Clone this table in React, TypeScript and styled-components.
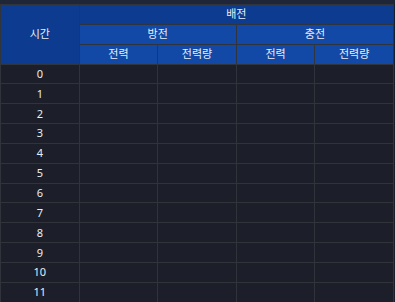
// @ts-nocheck
import styled, { createGlobalStyle } from 'styled-components'

const GlobalStyle = createGlobalStyle`
  body {
    margin: 0;
    background: #1c1f29;
    font-family: 'Noto Sans', 'Noto Sans CJK KR', sans-serif;
  }
`

const hours = Array.from({ length: 12 }, (_, i) => i)

const App = () => {
  return (
    <Page>
      <GlobalStyle />
      <TopStrip />
      <Table>
        <thead>
          <tr>
            <HeadCell rowSpan={3} $tone='dark'>
              시간
            </HeadCell>
            <HeadCell colSpan={4} $tone='dark'>
              배전
            </HeadCell>
          </tr>
          <tr>
            <HeadCell colSpan={2}>방전</HeadCell>
            <HeadCell colSpan={2}>충전</HeadCell>
          </tr>
          <tr>
            <HeadCell>전력</HeadCell>
            <HeadCell>전력량</HeadCell>
            <HeadCell>전력</HeadCell>
            <HeadCell>전력량</HeadCell>
          </tr>
        </thead>
        <tbody>
          {hours.map((h) => (
            <tr key={h}>
              <Cell>{h}</Cell>
              <Cell />
              <Cell />
              <Cell />
              <Cell />
            </tr>
          ))}
        </tbody>
      </Table>
    </Page>
  )
}

export default App

const Page = styled.div`
  width: 395px;
  height: 302px;
  overflow: hidden;
  background: #1c1f29;
`

const TopStrip = styled.div`
  height: 4px;
  background: #1f2638;
`

const Table = styled.table`
  width: 394px;
  border-collapse: collapse;
  table-layout: fixed;
  color: #e9eef7;
  font-size: 11px;

  tr {
    height: 19.85px;
  }
`

const HeadCell = styled.th`
  background: ${(p) => (p.$tone === 'dark' ? '#0c3b8f' : '#1249a7')};
  border: 1px solid #30343c;
  font-weight: 400;
  padding: 0;
  text-align: center;
  line-height: 14px;
`

const Cell = styled.td`
  border: 1px solid #30333a;
  padding: 0;
  text-align: center;
  line-height: 14px;
`
